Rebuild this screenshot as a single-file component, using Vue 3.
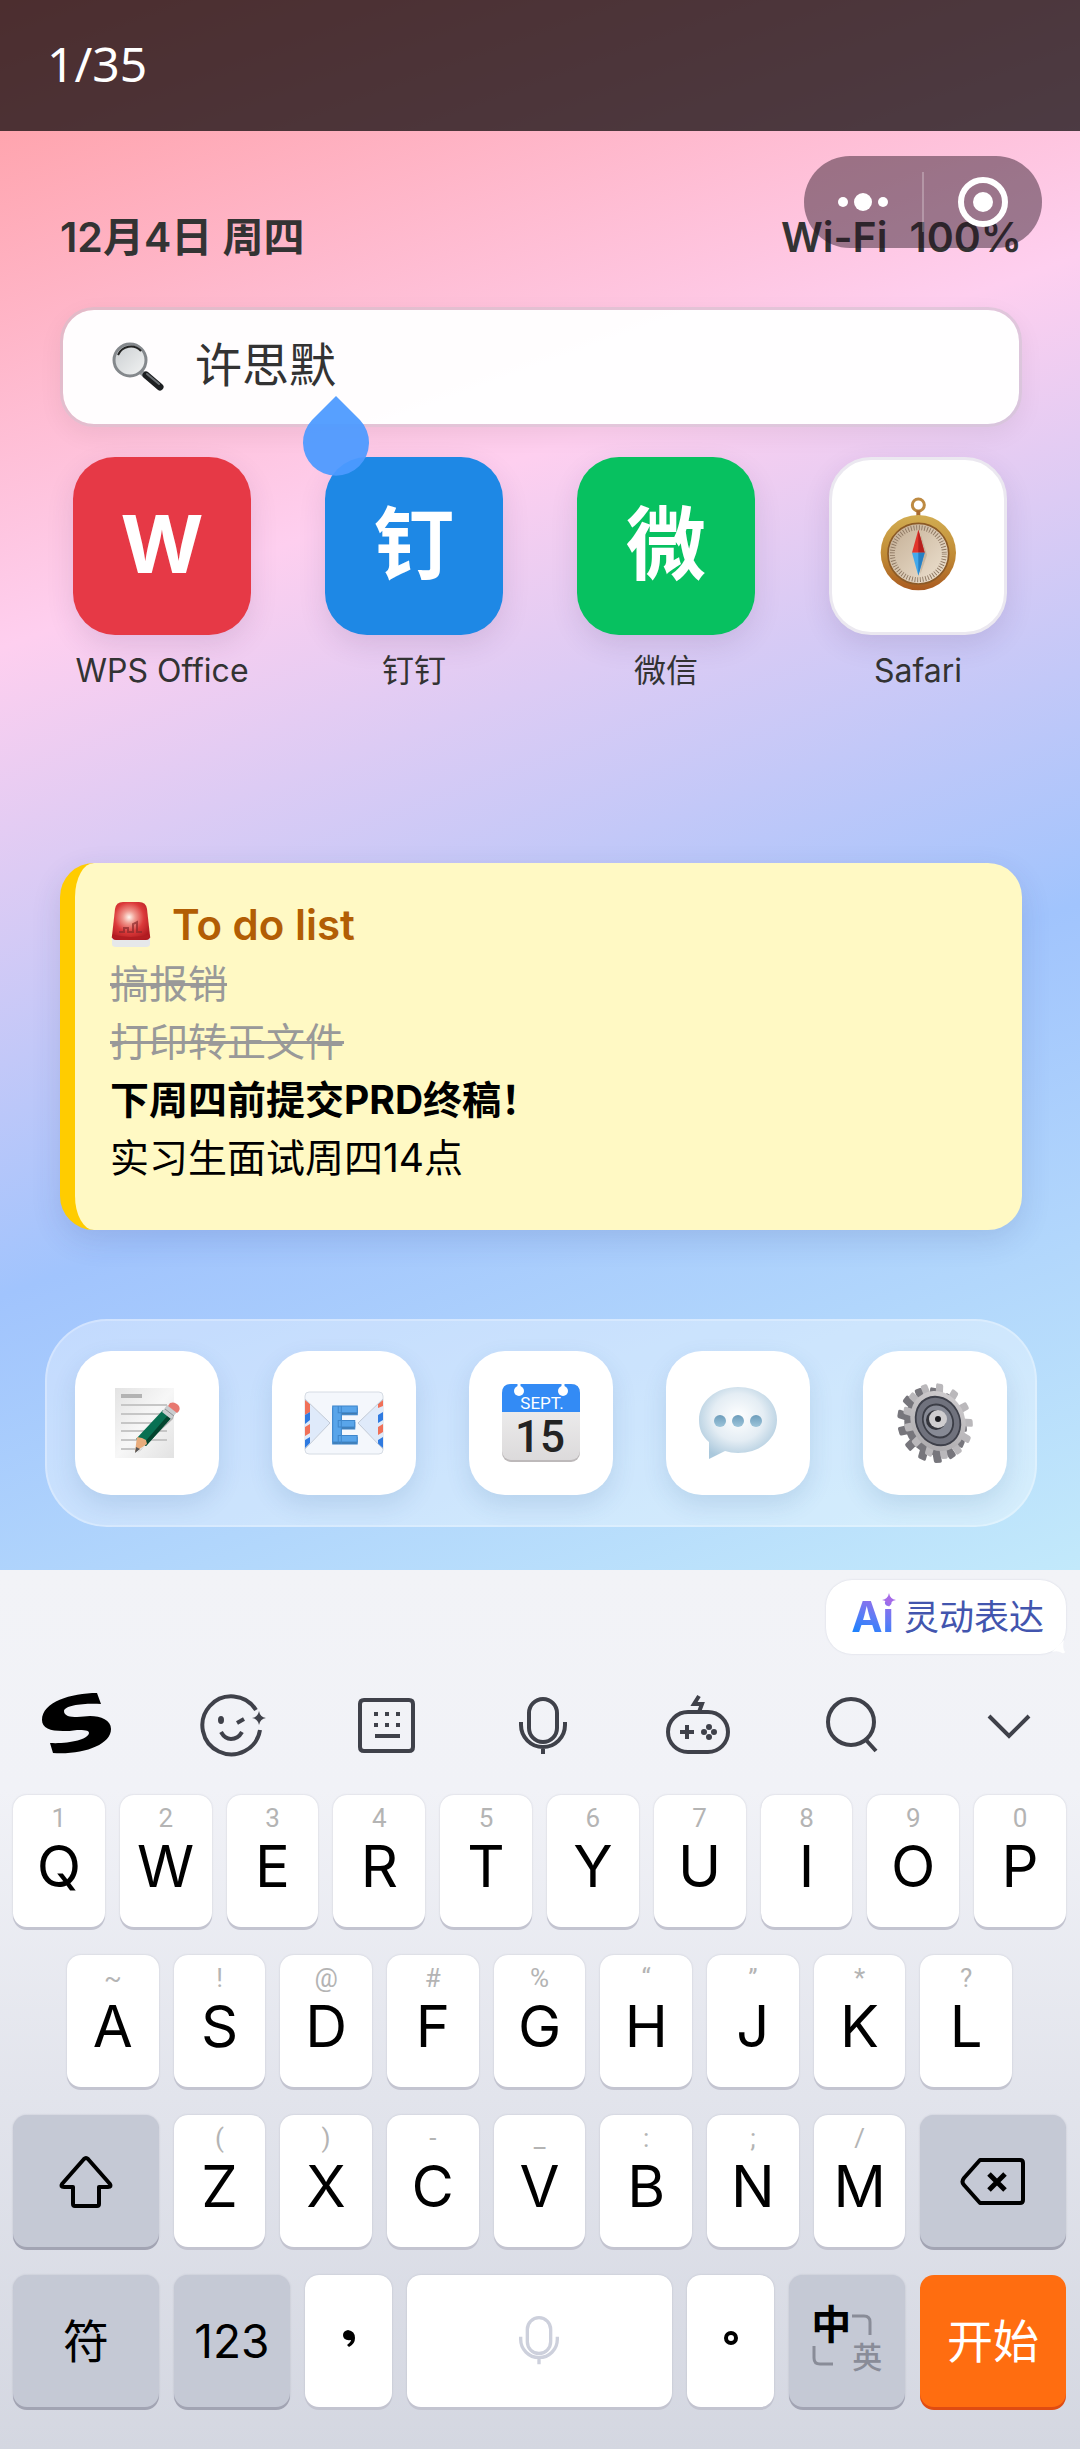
<template>
  <div class="phone">
    <main class="wallpaper">
      <header class="counter">1/35</header>

      <div class="capsule">
        <button type="button" aria-label="更多">
          <svg width="56" height="56" viewBox="0 0 56 56" fill="#fff">
            <circle cx="8" cy="28" r="5"/>
            <circle cx="28" cy="28" r="9"/>
            <circle cx="48" cy="28" r="5"/>
          </svg>
        </button>
        <span class="capsule-line"></span>
        <button type="button" aria-label="关闭">
          <svg width="56" height="56" viewBox="0 0 56 56">
            <circle cx="28" cy="28" r="22" fill="none" stroke="#fff" stroke-width="6"/>
            <circle cx="28" cy="28" r="10" fill="#fff"/>
          </svg>
        </button>
      </div>

      <div class="status">
        <span>12月4日 周四</span>
        <span class="status-right"><span>Wi-Fi</span><span>100%</span></span>
      </div>

      <label class="search">
        <svg class="search-icon" width="54" height="52" viewBox="0 0 54 52">
          <defs>
            <linearGradient id="lens" x1="0" y1="0" x2="1" y2="1">
              <stop offset="0" stop-color="#c9cdd0"/>
              <stop offset="1" stop-color="#f3f4f4"/>
            </linearGradient>
          </defs>
          <path d="M30 31l6 5" stroke="#9a9ea2" stroke-width="5"/>
          <path d="M35 34l14 12" stroke="#1d1f21" stroke-width="7" stroke-linecap="round"/>
          <path d="M36 33l12 10" stroke="#6a6e72" stroke-width="2" stroke-linecap="round"/>
          <circle cx="19" cy="19" r="16" fill="url(#lens)" stroke="#84888c" stroke-width="3"/>
          <path d="M7 14a14 14 0 0 1 23 -4" fill="none" stroke="#222" stroke-width="2"/>
        </svg>
        <input v-model="keyword" type="text" aria-label="搜索">
        <svg class="caret-drop" width="66" height="80" viewBox="0 0 66 80">
          <path d="M33 0L57 24A33 33 0 1 1 9 24Z" fill="#4c9aff" fill-opacity=".94"/>
        </svg>
      </label>

      <nav class="apps">
        <a v-for="app in apps" :key="app.name" href="#" class="app">
          <span class="app-tile" :class="'tile-' + app.id">
            <template v-if="app.glyph">{{ app.glyph }}</template>
            <svg v-else width="77" height="94" viewBox="305 176 231 282">
              <defs>
                <linearGradient id="brass" x1="0" y1="0" x2="0" y2="1">
                  <stop offset="0" stop-color="#d2ad52"/>
                  <stop offset=".55" stop-color="#c08a35"/>
                  <stop offset="1" stop-color="#a95a20"/>
                </linearGradient>
                <linearGradient id="dial" x1="0" y1="0" x2="1" y2="1">
                  <stop offset="0" stop-color="#c3ad93"/>
                  <stop offset="1" stop-color="#efe4d3"/>
                </linearGradient>
              </defs>
              <circle cx="420" cy="200" r="18" fill="none" stroke="#bd8a42" stroke-width="9"/>
              <path d="M420 216v20" stroke="#a86a30" stroke-width="12"/>
              <circle cx="420" cy="343" r="113" fill="url(#brass)"/>
              <circle cx="420" cy="346" r="91" fill="url(#dial)" stroke="#8b5a27" stroke-width="5"/>
              <circle cx="420" cy="346" r="78" fill="none" stroke="#8c7661" stroke-width="15" pathLength="180" stroke-dasharray="1 2"/>
              <path d="M428 290l18 60l-20 58z" fill="#9d8a74" opacity=".35"/>
              <path d="M420 274l19 69h-38z" fill="#e1352b"/>
              <path d="M420 274l19 69h-19z" fill="#b51f1d"/>
              <path d="M401 343h38l-19 69z" fill="#42a9ec"/>
              <path d="M420 343h19l-19 69z" fill="#267fc4"/>
            </svg>
          </span>
          <span class="app-name">{{ app.name }}</span>
        </a>
      </nav>

      <section class="todo">
        <h2>
          <svg width="42" height="48" viewBox="0 0 42 48">
            <defs>
              <radialGradient id="siren" cx=".45" cy=".4" r=".65">
                <stop offset="0" stop-color="#fff6ee"/>
                <stop offset=".25" stop-color="#f09a90"/>
                <stop offset=".6" stop-color="#dc3a3a"/>
                <stop offset="1" stop-color="#b01a20"/>
              </radialGradient>
            </defs>
            <path d="M2 36h38v7q0 3 -4 3h-30q-4 0 -4 -3z" fill="#e6e8ea"/>
            <path d="M5 8q1 -7 8 -7h16q7 0 8 7l3 27q0 4 -4 4h-30q-4 0 -4 -4z" fill="url(#siren)"/>
            <path d="M9 31h5v-4h4v4h5v-8l4 -2v10h5" fill="none" stroke="#8a2a2c" stroke-width="2" opacity=".7"/>
            <path d="M2 35q19 5 38 0" fill="none" stroke="#b21d22" stroke-width="3"/>
          </svg>
          To do list
        </h2>
        <ul>
          <li v-for="item in todos" :key="item.text" :class="item.state">{{ item.text }}</li>
        </ul>
      </section>

      <nav class="dock">
        <a href="#" class="dock-tile" aria-label="备忘录">
          <svg width="68" height="72" viewBox="0 0 68 72">
            <defs>
              <linearGradient id="paper" x1="0" y1="0" x2="1" y2="1">
                <stop offset="0" stop-color="#e3e3e3"/>
                <stop offset=".5" stop-color="#f7f7f7"/>
                <stop offset="1" stop-color="#e2e2e2"/>
              </linearGradient>
            </defs>
            <rect x="2" y="1" width="59" height="70" fill="url(#paper)"/>
            <rect x="8" y="7" width="21" height="4" fill="#b3b3b3"/>
            <path d="M8 18h46M8 27h46M8 36h46M8 44h46M8 53h46M8 62h14" stroke="#c6c6c6" stroke-width="2"/>
            <path d="M62 24l-34 39l-4 3l36 -34z" fill="#777" opacity=".5"/>
            <path d="M50 23l9 7l-26 29l-10 -7z" fill="#087052"/>
            <path d="M56 27l3 3l-26 29l-3 -2z" fill="#04452f"/>
            <path d="M29 51l-5 -1l-2 15l12 -8l-1 -4z" fill="#e8ac7c"/>
            <path d="M23 60l-1 6l5 -4z" fill="#555"/>
            <path d="M54 18l10 7l-6 7l-9 -7z" fill="#c9cdcf"/>
            <path d="M52 22l9 7" stroke="#8d9295"/>
            <path d="M57 16q5 -2 9 3q2 4 -2 7l-9 -7z" fill="#e77870"/>
          </svg>
        </a>
        <a href="#" class="dock-tile" aria-label="邮件">
          <svg width="80" height="64" viewBox="0 0 80 64">
            <rect x="1" y="1" width="78" height="62" rx="4" fill="#f4f7fc" stroke="#d6dce4"/>
            <path d="M1 9L26 32L1 57z M79 9L54 32L79 57z" fill="#dfeafa"/>
            <path d="M1 9l5 4v8l-5 3zM1 36l5 -3v9l-5 3zM79 9l-5 4v4l5 -2zM79 33l-5 3v8l5 -3z" fill="#f07058"/>
            <path d="M1 24l5 -3v8l-5 4zM1 49l5 -3v6l-5 5zM79 21l-5 3v8l5 -3zM79 46l-5 3v4l5 4z" fill="#2f7ae0"/>
            <path d="M1 8L26 32L1 58M79 8L54 32L79 58" fill="none" stroke="#c0c9d6"/>
            <text x="40" y="53" class="mail-shadow">E</text>
            <text x="40" y="51" class="mail-letter">E</text>
          </svg>
        </a>
        <a href="#" class="dock-tile" aria-label="日历">
          <svg width="80" height="80" viewBox="0 0 80 80">
            <defs>
              <linearGradient id="page" x1="0" y1="0" x2="0" y2="1">
                <stop offset="0" stop-color="#f4f4f4"/>
                <stop offset="1" stop-color="#dcdadb"/>
              </linearGradient>
            </defs>
            <rect x="1" y="1" width="78" height="78" rx="9" fill="#bdb9ba"/>
            <rect x="1" y="1" width="78" height="76" rx="9" fill="url(#page)"/>
            <path d="M1 29v-19q0 -9 9 -9h60q9 0 9 9v19z" fill="#338bf5"/>
            <path d="M18 0v8M62 0v8" stroke="#fff" stroke-width="3"/>
            <circle cx="18" cy="8" r="5" fill="#fff"/>
            <circle cx="62" cy="8" r="5" fill="#fff"/>
            <text x="41" y="26" class="cal-month">SEPT.</text>
            <text x="39" y="69" class="cal-day">15</text>
          </svg>
        </a>
        <a href="#" class="dock-tile" aria-label="信息">
          <svg width="80" height="76" viewBox="0 0 80 76">
            <defs>
              <radialGradient id="balloon" cx=".5" cy=".42" r=".6">
                <stop offset="0" stop-color="#fff"/>
                <stop offset=".55" stop-color="#e4edf4"/>
                <stop offset="1" stop-color="#aac8dc"/>
              </radialGradient>
              <linearGradient id="dot" x1="0" y1="0" x2="0" y2="1">
                <stop offset="0" stop-color="#6d9dbb"/>
                <stop offset="1" stop-color="#9cc4da"/>
              </linearGradient>
            </defs>
            <path d="M40 2C62 2 79 16 79 35C79 54 62 68 40 68C35 68 31 67 27 66L11 74V57C4 51 1 44 1 35C1 16 18 2 40 2Z" fill="url(#balloon)"/>
            <circle cx="22" cy="36" r="6" fill="url(#dot)"/>
            <circle cx="40" cy="36" r="6" fill="url(#dot)"/>
            <circle cx="58" cy="36" r="6" fill="url(#dot)"/>
          </svg>
        </a>
        <a href="#" class="dock-tile" aria-label="设置">
          <svg width="80" height="80" viewBox="0 0 80 80">
            <defs>
              <linearGradient id="steel" x1="0" y1="0" x2="1" y2="1">
                <stop offset="0" stop-color="#d3d0d2"/>
                <stop offset="1" stop-color="#a9a7aa"/>
              </linearGradient>
            </defs>
            <g transform="translate(37 42) rotate(62) scale(1 .86)">
              <rect v-for="n in 13" :key="n" x="-4" y="-39" width="9" height="14" rx="2" fill="#77767c" :transform="`rotate(${n * 360 / 13})`"/>
              <circle r="31" fill="#77767c"/>
            </g>
            <g transform="translate(43 38) rotate(62) scale(1 .86)">
              <rect v-for="n in 13" :key="n" x="-4" y="-39" width="8" height="14" rx="2" fill="#bab8bb" :transform="`rotate(${n * 360 / 13})`"/>
              <circle r="31" fill="url(#steel)"/>
              <circle r="25" fill="#70727d" stroke="#3e404a" stroke-width="2"/>
              <circle r="17" fill="#878a95" stroke="#3b3d46" stroke-width="2"/>
            </g>
            <circle cx="41" cy="37" r="10" fill="#34353c"/>
            <circle cx="43" cy="36" r="9" fill="#cfcdcf"/>
            <circle cx="43" cy="36" r="3" fill="#1b1b1f"/>
          </svg>
        </a>
      </nav>
    </main>

    <section class="keyboard">
      <button type="button" class="ai">
        <span class="ai-logo">
          Ai
          <svg class="ai-star" width="14" height="14" viewBox="0 0 14 14">
            <path d="M7 0Q8 6 14 7Q8 8 7 14Q6 8 0 7Q6 6 7 0Z" fill="#a56be8"/>
          </svg>
        </span>
        灵动表达
        <svg class="ai-tail" width="14" height="14" viewBox="0 0 14 14">
          <path d="M12 0Q10 8 13 12Q12 14 10 13Q6 10 0 12z" fill="#fff"/>
        </svg>
      </button>

      <div class="tools">
        <button v-for="tool in tools" :key="tool.label" type="button" :aria-label="tool.label">
          <svg width="70" height="70" viewBox="0 0 70 70">
            <path v-if="tool.line" :d="tool.line" fill="none" stroke="#3f414a" stroke-width="4"/>
            <path v-if="tool.fill" :d="tool.fill" :fill="tool.color || '#3f414a'"/>
          </svg>
        </button>
      </div>

      <div class="keys">
        <div class="row">
          <button v-for="k in rowOne" :key="k[0]" type="button" class="key">
            <small>{{ k[1] }}</small>{{ k[0] }}
          </button>
        </div>
        <div class="row row-inset">
          <button v-for="k in rowTwo" :key="k[0]" type="button" class="key">
            <small>{{ k[1] }}</small>{{ k[0] }}
          </button>
        </div>
        <div class="row">
          <button type="button" class="key key-fn key-wide" aria-label="Shift">
            <svg width="56" height="56" viewBox="0 0 56 56" fill="none" stroke="#000" stroke-width="4" stroke-linejoin="round">
              <path d="M26 6L4 31Q2 34 6 34H15V51Q15 53 17 53H39Q41 53 41 51V34H50Q54 34 52 31L30 6Q28 4 26 6Z"/>
            </svg>
          </button>
          <button v-for="k in rowThree" :key="k[0]" type="button" class="key">
            <small>{{ k[1] }}</small>{{ k[0] }}
          </button>
          <button type="button" class="key key-fn key-wide" aria-label="删除">
            <svg class="erase" width="66" height="50" viewBox="0 0 66 50" fill="none" stroke="#000" stroke-width="4" stroke-linejoin="round">
              <path d="M20 4H60Q63 4 63 7V44Q63 47 60 47H20L4 29Q1 26 4 22Z"/>
              <path d="M29 18L45 34M45 18L29 34" stroke-width="5"/>
            </svg>
          </button>
        </div>
        <div class="row">
          <button type="button" class="key key-fn key-wide key-word">符</button>
          <button type="button" class="key key-fn key-mid key-word">123</button>
          <button type="button" class="key key-mark" aria-label="逗号">
            <svg width="20" height="36" viewBox="0 0 20 36">
              <path d="M10 7q7 1 7 8q0 6 -6 9l-2 -2q4 -3 4 -5q-8 1 -8 -5q0 -4 5 -5z" fill="#000"/>
            </svg>
          </button>
          <button type="button" class="key key-space" aria-label="空格">
            <svg width="50" height="50" viewBox="6 6 60 60" fill="none" stroke="#cdd0dc" stroke-width="4">
              <path d="M22 22a14 14 0 0 1 28 0v15a14 14 0 0 1 -28 0zM14 31v3a22 22 0 0 0 44 0v-3M36 56v8"/>
            </svg>
          </button>
          <button type="button" class="key key-mark" aria-label="句号">
            <svg width="20" height="36" viewBox="0 0 20 36">
              <circle cx="10" cy="15" r="5" fill="none" stroke="#000" stroke-width="4"/>
            </svg>
          </button>
          <button type="button" class="key key-fn key-mid key-lang">
            <span class="lang">
              <b>中</b>
              <svg width="24" height="24" viewBox="0 0 24 24"><path d="M1 3H13Q19 3 19 9V22" fill="none" stroke="#898c98" stroke-width="3"/></svg>
              <svg width="24" height="24" viewBox="0 0 24 24"><path d="M3 1V13Q3 19 9 19H22" fill="none" stroke="#898c98" stroke-width="3"/></svg>
              <i>英</i>
            </span>
          </button>
          <button type="button" class="key key-go key-wide key-word">开始</button>
        </div>
      </div>
    </section>
  </div>
</template>

<script setup>
import { ref } from 'vue'

const keyword = ref('许思默')

const apps = [
  { id: 'wps', name: 'WPS Office', glyph: 'W' },
  { id: 'ding', name: '钉钉', glyph: '钉' },
  { id: 'wechat', name: '微信', glyph: '微' },
  { id: 'safari', name: 'Safari', glyph: '' }
]

const todos = [
  { text: '搞报销', state: 'is-done' },
  { text: '打印转正文件', state: 'is-done' },
  { text: '下周四前提交PRD终稿！', state: 'is-urgent' },
  { text: '实习生面试周四14点', state: '' }
]

const rowOne = ['Q1', 'W2', 'E3', 'R4', 'T5', 'Y6', 'U7', 'I8', 'O9', 'P0']
const rowTwo = ['A~', 'S!', 'D@', 'F#', 'G%', 'H“', 'J”', 'K*', 'L?']
const rowThree = ['Z(', 'X)', 'C-', 'V_', 'B:', 'N;', 'M/']

const tools = [
  {
    label: '输入法',
    color: '#000',
    fill: 'M56 2L60 13C44 12 24 14 23 20C23 25 29 26 36 26C41 26 45 25 49 25C60 25 70 29 70 38C70 54 42 64 12 62L9 52C26 53 47 49 48 42C48 39 43 39 36 39C31 40 26 40 22 40C9 40 1 37 1 29C1 11 30 2 56 2Z'
  },
  {
    label: '表情',
    line: 'M59 19A29 29 0 1 0 63 39M40 32L47 28M24 41Q28 48 34 48Q41 48 45 41',
    fill: 'M62 20Q63 26 69 27Q63 28 62 34Q61 28 55 27Q61 26 62 20ZM24 25a3 4 0 0 1 0 8a3 4 0 0 1 0 -8Z'
  },
  {
    label: '键盘',
    line: 'M12 9H57Q61 9 61 13V56Q61 60 57 60H12Q8 60 8 56V13Q8 9 12 9ZM23 45H48',
    fill: 'M22 21h4v4h-4zM33 21h4v4h-4zM44 21h4v4h-4zM22 32h4v4h-4zM33 32h4v4h-4zM44 32h4v4h-4z'
  },
  {
    label: '语音',
    line: 'M21 22a14 14 0 0 1 28 0v15a14 14 0 0 1 -28 0zM13 31v3a22 22 0 0 0 44 0v-3M35 56v7'
  },
  {
    label: '游戏',
    line: 'M25 21H45A20 20 0 0 1 45 61H25A20 20 0 0 1 25 21ZM24 34V48M17 41H31M36 5L31 13H39L36 21',
    fill: 'M46 33a3 3 0 0 1 0 6a3 3 0 0 1 0 -6zM46 43a3 3 0 0 1 0 6a3 3 0 0 1 0 -6zM41 38a3 3 0 0 1 0 6a3 3 0 0 1 0 -6zM51 38a3 3 0 0 1 0 6a3 3 0 0 1 0 -6z'
  },
  {
    label: '搜索',
    line: 'M32 8a23 23 0 0 1 0 46a23 23 0 0 1 0 -46zM47 49L57 60'
  },
  {
    label: '收起',
    line: 'M15 25L35 45L55 25'
  }
]
</script>

<style>
body {
  margin: 0;
  background: #d5d8e2;
}
</style>

<style scoped>
.phone {
  font-family: Inter, 'Noto Sans CJK SC', sans-serif;
  color: #333;
}

button {
  padding: 0;
  border: 0;
  background: none;
  color: inherit;
  font-family: inherit;
  cursor: pointer;
}

a {
  color: inherit;
  text-decoration: none;
}

svg {
  display: block;
  flex-shrink: 0;
}

.wallpaper {
  position: relative;
  padding-bottom: 43px;
  background: linear-gradient(160deg, #ff9a9e 0%, #fecfef 33%, #a1c4fd 66%, #c2e9fb 100%);
}

.counter {
  padding: 32px 47px 35px;
  background: rgba(0, 0, 0, 0.7);
  color: #fff;
  font: 48px/64px 'Noto Sans', sans-serif;
}

.capsule {
  position: absolute;
  top: 156px;
  right: 38px;
  display: flex;
  align-items: center;
  width: 238px;
  height: 92px;
  border-radius: 46px;
  background: rgba(40, 20, 35, 0.46);
}

.capsule button {
  flex: 1;
  display: flex;
  justify-content: center;
}

.capsule-line {
  width: 2px;
  height: 60px;
  background: rgba(255, 255, 255, 0.25);
}

.status {
  display: flex;
  justify-content: space-between;
  padding: 82px 58px 0 60px;
  font-size: 41px;
  font-weight: 600;
  line-height: 48px;
}

.status-right {
  display: flex;
  gap: 22px;
}

.search {
  position: relative;
  display: flex;
  align-items: center;
  gap: 30px;
  height: 114px;
  margin: 46px 58px 0 60px;
  padding: 0 48px;
  border: 3px solid rgba(200, 190, 200, 0.5);
  border-radius: 34px;
  background: rgba(255, 255, 255, 0.97);
  background-clip: padding-box;
  box-shadow: 0 8px 24px rgba(0, 0, 0, 0.06);
}

.search input {
  flex: 1;
  min-width: 0;
  padding: 0 0 4px;
  border: 0;
  outline: 0;
  background: none;
  color: #333;
  font-family: inherit;
  font-size: 47px;
  line-height: 64px;
}

.caret-drop {
  position: absolute;
  top: 86px;
  left: 240px;
  z-index: 1;
}

.apps {
  display: grid;
  grid-template-columns: repeat(4, 1fr);
  gap: 48px;
  padding: 30px 60px 0;
}

.app {
  display: flex;
  flex-direction: column;
  align-items: center;
  gap: 12px;
}

.app-tile {
  box-sizing: border-box;
  display: flex;
  align-items: center;
  justify-content: center;
  width: 178px;
  height: 178px;
  padding-bottom: 4px;
  border-radius: 42px;
  color: #fff;
  font-size: 80px;
  font-weight: 700;
  line-height: 96px;
  box-shadow: 0 10px 28px rgba(60, 30, 90, 0.12);
}

.tile-wps { background: #e63946; }
.tile-ding { background: #1e88e5; }
.tile-wechat { background: #07c160; }

.tile-safari {
  border: 3px solid #ebe8f0;
  background: #fff;
}

.app-name {
  font-size: 32px;
  line-height: 48px;
  white-space: nowrap;
}

.todo {
  margin: 168px 58px 0 60px;
  padding: 32px 35px 43px;
  border-left: 15px solid #ffcc00;
  border-radius: 34px;
  background: #fff9c4;
  color: #000;
  font-size: 39px;
  line-height: 58px;
  box-shadow: 0 10px 30px rgba(40, 60, 120, 0.14);
}

.todo h2 {
  display: flex;
  align-items: center;
  gap: 20px;
  margin: 0;
  color: #b25e04;
  font-size: 42px;
  font-weight: 600;
  line-height: 60px;
}

.todo ul {
  margin: 0;
  padding: 0;
  list-style: none;
}

.is-done {
  color: #999;
  text-decoration: line-through;
}

.is-urgent {
  font-weight: 700;
}

.dock {
  display: flex;
  align-items: center;
  justify-content: space-between;
  margin: 89px 43px 0 45px;
  padding: 30px 28px;
  border: 2px solid rgba(255, 255, 255, 0.25);
  border-radius: 62px;
  background: rgba(255, 255, 255, 0.35);
}

.dock-tile {
  display: flex;
  align-items: center;
  justify-content: center;
  width: 144px;
  height: 144px;
  border-radius: 36px;
  background: #fff;
  box-shadow: 0 10px 24px rgba(40, 90, 140, 0.14);
}

.mail-letter,
.mail-shadow {
  fill: #59a5ea;
  stroke: #3f87cc;
  stroke-width: 1px;
  font: 900 50px Roboto, sans-serif;
  text-anchor: middle;
}

.mail-shadow {
  fill: #4379a8;
}

.cal-month {
  fill: #fff;
  font: 17px Roboto, sans-serif;
  text-anchor: middle;
}

.cal-day {
  fill: #232323;
  font: 500 44px Roboto, sans-serif;
  text-anchor: middle;
}

.keyboard {
  display: flex;
  flex-direction: column;
  padding: 10px 14px 42px 13px;
  background: linear-gradient(#f2f3f7 0%, #f1f2f7 25%, #e2e4ec 60%, #d4d7e1 100%);
}

.ai {
  position: relative;
  align-self: flex-end;
  display: flex;
  align-items: center;
  gap: 10px;
  height: 74px;
  padding: 0 22px 0 25px;
  border-radius: 26px;
  background: #fff;
  color: #4255ae;
  font-size: 35px;
  line-height: 48px;
  box-shadow: 0 0 2px rgba(80, 90, 130, 0.2);
}

.ai-logo {
  position: relative;
  background: linear-gradient(20deg, #0f83ff 10%, #5f7cf5 50%, #a56be8 90%);
  background-clip: text;
  color: transparent;
  font-size: 42px;
  font-weight: 700;
}

.ai-star {
  position: absolute;
  top: 0;
  right: -2px;
}

.ai-tail {
  position: absolute;
  right: 0;
  bottom: 0;
}

.tools {
  display: flex;
  justify-content: space-between;
  margin: 37px 22px 34px 28px;
}

.keys {
  display: flex;
  flex-direction: column;
  gap: 28px;
}

.row {
  display: flex;
  gap: 15px;
}

.row-inset {
  padding: 0 54px;
}

.key {
  display: flex;
  flex: 92 1 0;
  flex-direction: column;
  align-items: center;
  box-sizing: border-box;
  min-width: 0;
  height: 132px;
  padding-top: 7px;
  border-radius: 14px;
  background: #fff;
  color: #000;
  font-size: 58px;
  line-height: 64px;
  box-shadow: 0 3px 0 #c3c4d0, 0 0 2px rgba(90, 95, 120, 0.25);
}

.key small {
  color: #b4b4b4;
  font-family: Roboto, sans-serif;
  font-size: 26px;
  line-height: 32px;
}

.key-fn,
.key-go,
.key-mark,
.key-space {
  justify-content: center;
  padding-top: 0;
}

.key-fn {
  background: #c5c9d5;
  box-shadow: 0 3px 0 #a2a4b3, 0 0 2px rgba(90, 95, 120, 0.25);
}

.key-go {
  background: #ff6d10;
  color: #fff;
  box-shadow: 0 3px 0 #e04c12;
}

.key-wide { flex-grow: 146; }
.key-mid { flex-grow: 116; }
.key-mark { flex-grow: 87; }
.key-space { flex-grow: 266; }

.key-word {
  font-size: 46px;
}

.lang {
  display: grid;
  grid-template-columns: 40px 32px;
  grid-template-rows: 32px 32px;
  align-items: center;
}

.lang b {
  font-size: 40px;
  font-weight: 700;
  line-height: 32px;
}

.lang i {
  color: #898c98;
  font-size: 30px;
  font-style: normal;
  font-weight: 500;
  line-height: 32px;
}
</style>
